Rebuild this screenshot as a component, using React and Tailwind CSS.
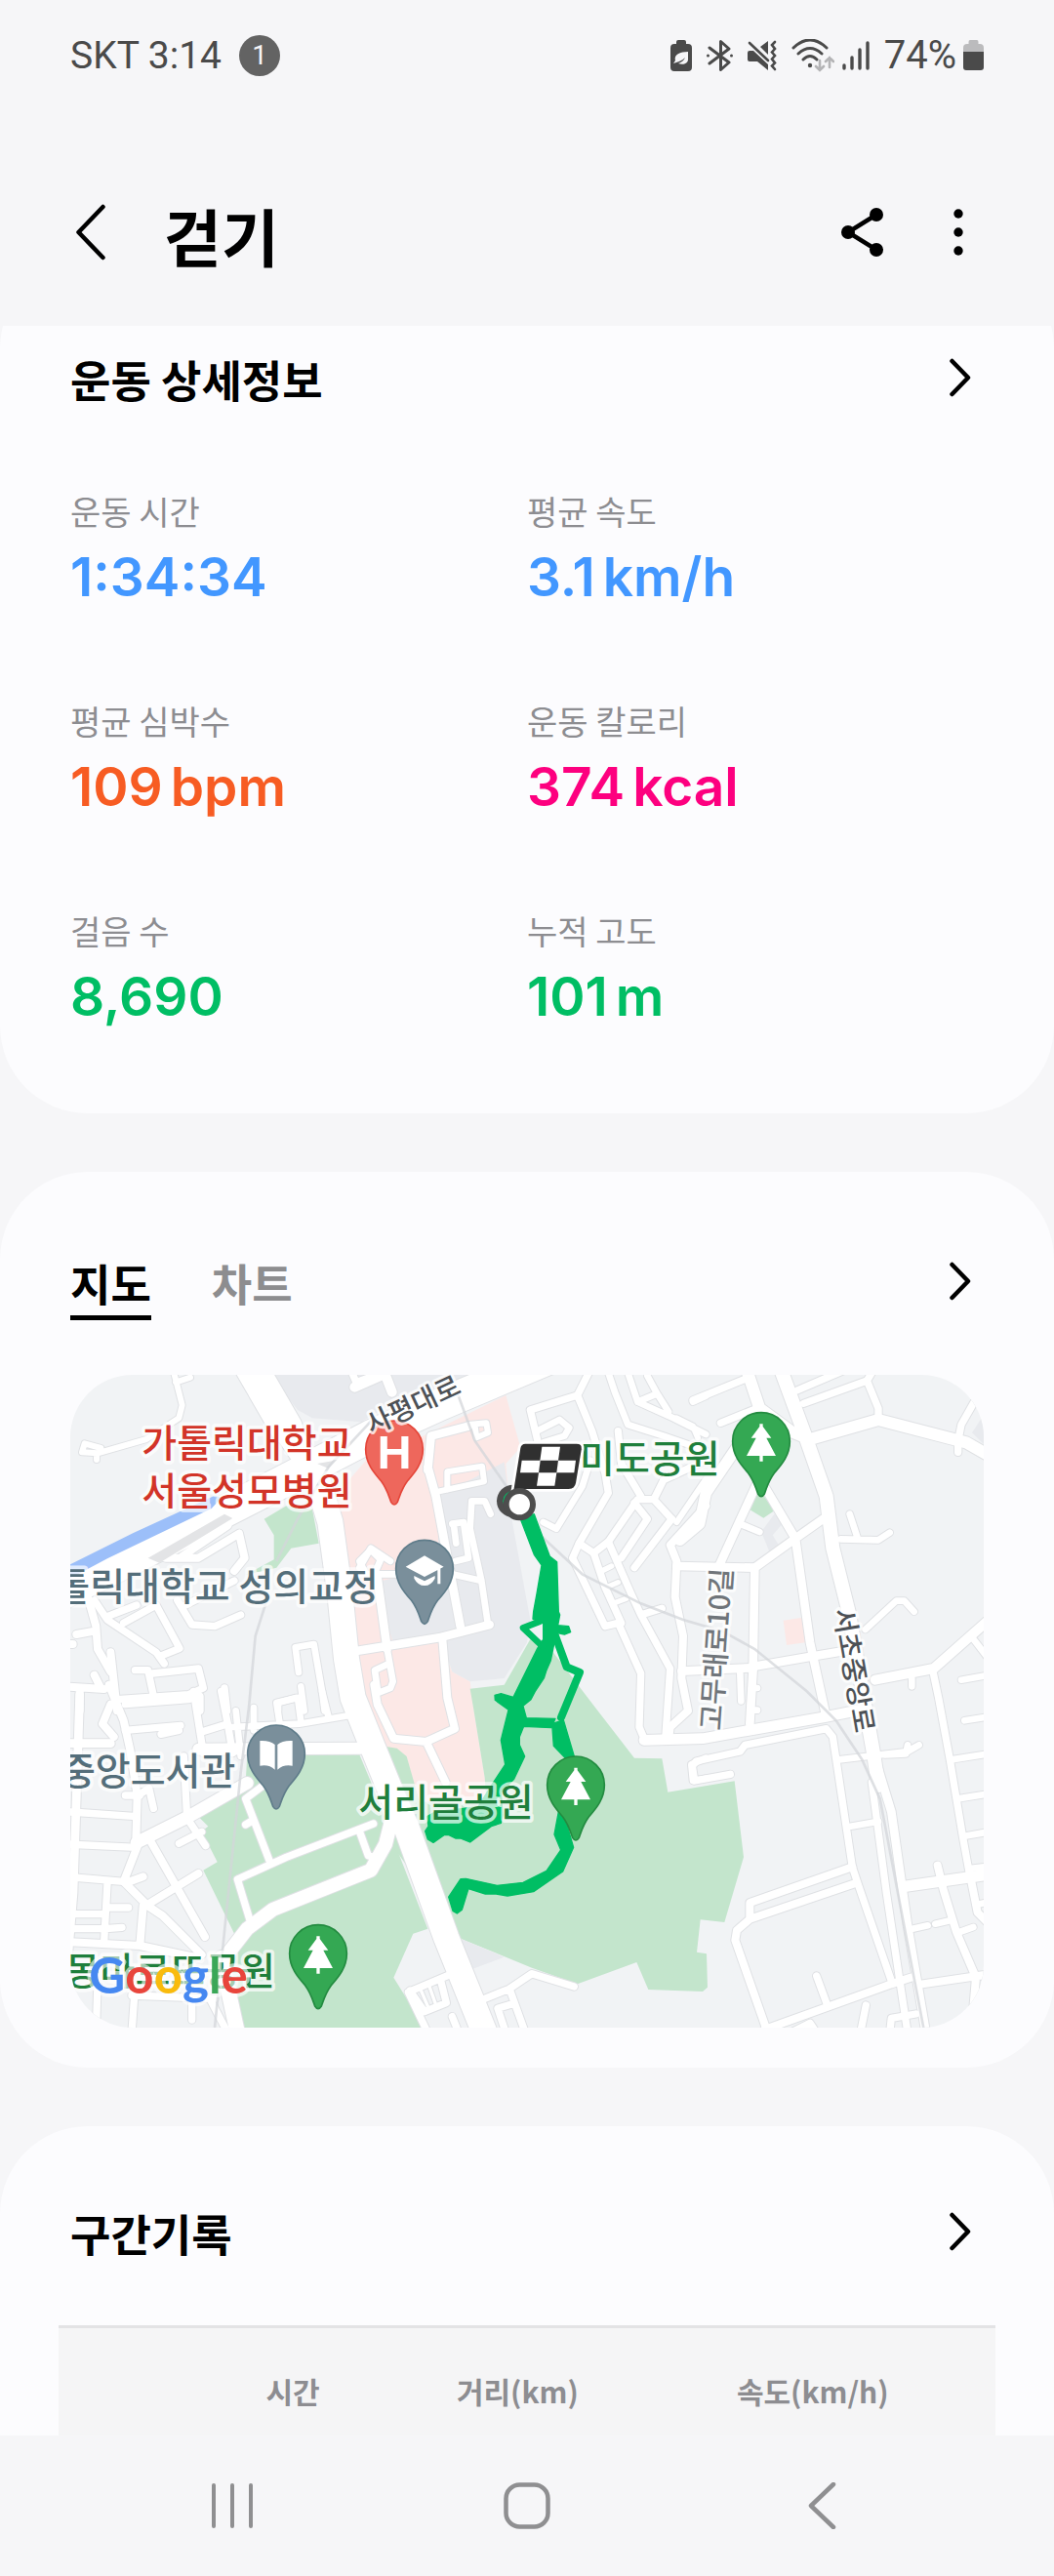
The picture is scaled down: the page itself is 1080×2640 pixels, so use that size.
const KR = "font-['Noto_Sans_CJK_KR',sans-serif]";

const STATS = [
  { label: '운동 시간', value: '1:34:34', unit: '', tone: 'text-[#4297ff]' },
  { label: '평균 속도', value: '3.1', unit: 'km/h', tone: 'text-[#4297ff]' },
  { label: '평균 심박수', value: '109', unit: 'bpm', tone: 'text-[#f75c23]' },
  { label: '운동 칼로리', value: '374', unit: 'kcal', tone: 'text-[#fd007f]' },
  { label: '걸음 수', value: '8,690', unit: '', tone: 'text-[#00be64]' },
  { label: '누적 고도', value: '101', unit: 'm', tone: 'text-[#00be64]' },
];

function StatusBar() {
  return (
    <div className="flex h-[114px] items-center justify-between px-[72px] text-[#4a4a4a]">
      <div className="flex items-center gap-[18px]">
        <span className="font-['Roboto',sans-serif] text-[39px] leading-12">SKT 3:14</span>
        <span className="flex size-[42px] items-center justify-center rounded-full bg-[#636363] font-['Roboto',sans-serif] text-[28px] leading-8 text-[#f6f6f8]">
          1
        </span>
      </div>
      <div className="flex items-center gap-[7px]">
        <div className="flex items-center gap-[15px]">
          <svg viewBox="0 0 22 32" className="h-8 w-[22px]" aria-hidden="true">
            <path fill="currentColor" d="M8 0h6q2 0 2 2v2h2q4 0 4 4v20q0 4-4 4H4q-4 0-4-4V8q0-4 4-4h2V2q0-2 2-2Z" />
            <path fill="#f6f6f8" d="M18 12v8c0 4-5 6-10 4 3-1 6-3 7-6-3 3-6 4-9 5l-3 1 2-3c-2-6 5-9 13-9Z" />
          </svg>
          <svg viewBox="0 0 27 32" className="h-8 w-[27px]" fill="none" stroke="currentColor" strokeWidth="3" strokeLinejoin="round" strokeLinecap="round" aria-hidden="true">
            <path d="M3 8 23 23l-8.500 7.500V1.500L23 9 3 24" />
            <circle cx="1.500" cy="16" r="1.500" fill="currentColor" stroke="none" />
            <circle cx="25.500" cy="16" r="1.500" fill="currentColor" stroke="none" />
          </svg>
          <svg viewBox="0 0 30 32" className="h-8 w-[30px]" aria-hidden="true">
            <path fill="currentColor" d="M2 11h4l15 14v6L10 22H2q-2 0-2-2v-7q0-2 2-2ZM13 7l8-6v14Z" />
            <path fill="none" stroke="currentColor" strokeWidth="2.600" strokeLinecap="round" d="m2 3 19 18M28 2l-3 3 3 4-3 3.500 3 3.500-3 3.500 3 4-3 3 3 3.500" />
          </svg>
          <div className="flex items-center gap-2">
            <svg viewBox="0 0 44 34" className="h-[34px] w-[44px]" fill="none" strokeLinecap="round" aria-hidden="true">
              <path stroke="currentColor" strokeWidth="3" d="M2 9q17-16 34 0M7 15q12-11 24 0M12 21q7-7 14 0" />
              <circle cx="19" cy="27" r="2.200" fill="currentColor" />
              <path stroke="#b4b4b6" strokeWidth="2.600" d="M29 22v10m-4-4 4 4 4-4M39 29V19m-4 4 4-4 4 4" />
            </svg>
            <svg viewBox="0 0 28 32" className="h-8 w-[28px]" stroke="currentColor" strokeWidth="3.400" strokeLinecap="round" aria-hidden="true">
              <path d="M2 26v3M10 18v11M18 10v19M26 3v26" />
            </svg>
          </div>
          <span className="font-['Roboto',sans-serif] text-[40px] leading-12">74%</span>
        </div>
        <svg viewBox="0 0 21 32" className="h-8 w-[21px]" aria-hidden="true">
          <path fill="#bbbbbd" d="M7 0h7q1.500 0 1.500 2v2H17q4 0 4 4v5H0V8q0-4 4-4h1.500V2Q5.500 0 7 0Z" />
          <path fill="currentColor" d="M0 12h21v16q0 3-3 3H3q-3 0-3-3Z" />
        </svg>
      </div>
    </div>
  );
}

function AppHeader() {
  return (
    <header className="flex h-[220px] items-center justify-between pl-[72px] pr-20 pt-7">
      <div className="flex items-center gap-14">
        <button type="button" aria-label="뒤로">
          <svg viewBox="0 0 40 60" className="h-[60px] w-[40px]" fill="none" stroke="#000" strokeWidth="4.500" strokeLinecap="round" strokeLinejoin="round">
            <path d="M33.500 4 8.500 30l25 26" />
          </svg>
        </button>
        <h1 className="pt-1 text-[64px] font-bold leading-[84px] text-black">걷기</h1>
      </div>
      <div className="flex items-center gap-14">
        <button type="button" aria-label="공유">
          <svg viewBox="0 0 48 52" className="h-[52px] w-[48px]" fill="#000">
            <path d="M38 8 9 26l29 18" fill="none" stroke="#000" strokeWidth="4.500" />
            <circle cx="38" cy="8" r="7" />
            <circle cx="9" cy="26" r="7" />
            <circle cx="38" cy="44" r="7" />
          </svg>
        </button>
        <button type="button" aria-label="더보기" className="flex w-9 justify-center">
          <svg viewBox="0 0 10 48" className="h-12 w-[10px]" fill="#000">
            <circle cx="5" cy="5" r="4.700" />
            <circle cx="5" cy="24" r="4.700" />
            <circle cx="5" cy="43" r="4.700" />
          </svg>
        </button>
      </div>
    </header>
  );
}

function MoreButton({ label }) {
  return (
    <button type="button" aria-label={label} className="flex h-[62px] w-[48px] items-center justify-center">
      <svg viewBox="0 0 24 40" className="h-10 w-6" fill="none" stroke="#000" strokeWidth="4.500" strokeLinecap="round" strokeLinejoin="round">
        <path d="M3.500 3 20 20 3.500 37" />
      </svg>
    </button>
  );
}

function DetailCard() {
  return (
    <section className="overflow-hidden">
      <div className="-mt-[67px] rounded-[90px] bg-[#fcfcfe] px-[72px] pb-[83px] pt-[89px]">
        <div className="flex items-start justify-between">
          <h2 className="text-[45px] font-bold leading-[66px] text-black">운동 상세정보</h2>
          <MoreButton label="운동 상세정보 더보기" />
        </div>
        <dl className="mt-[76px] grid grid-cols-2 gap-y-[85px]">
          {STATS.map((s) => (
            <div key={s.label}>
              <dt className="mb-1 text-[34px] leading-[52px] text-[#8d8d91]">{s.label}</dt>
              <dd className={`flex gap-2 font-['Inter',sans-serif] text-[55px] font-semibold leading-[74px] ${s.tone}`}>
                <span>{s.value}</span>
                {s.unit && <span>{s.unit}</span>}
              </dd>
            </div>
          ))}
        </dl>
      </div>
    </section>
  );
}

/* Streets are listed per tile: each tile has an origin, and each street a width and a line. */
const TILES = [
  {
    at: [0, 0],
    roads: [
      [18, 'M352,10 L380,120 L370,160 L270,225 L120,268 L72,265 L80,238 L130,252 M360,50 L405,35 M117,270V288'],
      [22, 'M902,20 L915,50 L1010,15'],
      [98, 'M-20,715 L200,605 L700,350 L960,215 L1180,115 L1500,-20'],
      [24, 'M330,590 L430,590 L555,515 M380,585 L520,490 M555,515 L572,590 L540,630'],
      [22, 'M110,720 L150,780 L300,880 L325,915 M200,790 L300,735 L372,868 L310,893 M150,770 L240,735 M365,720 L410,795 L480,800 L560,765 M380,740 L500,680 L540,660'],
      [24, 'M90,710 L115,800 L120,870 L160,940 M55,825 L110,815 M30,855h14 M160,880 L180,1060 M110,950 L130,990 M20,985 L140,993 M65,1000 V1060'],
      [22, 'M235,935 H275 L290,1005 M290,945 L430,930 L445,990 L400,1010 L180,1025 M435,1015 V1060 M510,990 L518,1060'],
      [20, 'M738,942 L728,865 L785,855 L810,1000 L818,1060 M745,985 L755,1060 M675,1060 V1035 L730,1020'],
      [20, 'M945,640 L925,600 L960,565 L990,595 L975,630 M870,640 L1060,640'],
    ],
  },
  {
    at: [930, 0],
    roads: [
      [30, 'M70,15 L95,80 M-20,65 L60,30'],
      [26, 'M205,310 L230,400 L305,800 M205,320 L215,215 L330,185'],
      [18, 'M330,180 L385,175 L390,205 L355,220 L350,185 M240,385 L378,355 L372,308 L265,325 L265,380'],
      [20, 'M398,455 L380,415 L340,415 L335,500 L370,660 L390,795 M280,485 L315,480 L330,590 L290,600 M285,490 L292,545 M280,640 L370,660'],
      [26, 'M-70,885 L240,835 L395,795 M50,650 L80,870'],
      [24, 'M250,840 L265,1020 L288,1115 L200,1155 L100,1145 L50,1040 L40,980 M200,1155 L260,1280'],
      [20, 'M80,870 L98,970 L90,990 L52,1005 L42,935 L85,915 M-5,620 L30,560 L90,600'],
      [22, 'M700,20 L665,90 L520,135 L545,240 M665,90 L710,200 L750,330 L760,390 L670,545 L650,590 L750,800 L790,790 L860,945 L855,1110 L870,1145'],
      [20, 'M540,200 L610,165 L640,190 L625,215 L560,235'],
      [20, 'M760,20 L780,80 L820,180 L930,215 L1060,260 M820,20 L850,110 L960,160 L1060,210 M850,110 L910,85 L880,30 M910,85 L945,140 M1020,110 L1060,92'],
      [24, 'M1060,430 L950,550 L970,600 L965,710 L990,830 L985,960 L1005,1060 L950,1110 L945,1150'],
      [22, 'M670,545 L715,575 L760,540 L850,410 L900,410 L955,470 M860,400 L800,300 L790,200 M900,410 L930,350 L1060,290'],
      [22, 'M715,575 L750,680 L800,790 M760,540 L830,700 L860,765 L950,930 L935,1150 M860,765 L925,745 M840,420 L880,470 L800,590 M955,470 L840,620'],
      [16, 'M740,630 L770,615 M755,680 L790,665 M775,730 L815,715'],
      [20, 'M600,500 L680,370 L705,290 M560,480 L600,500'],
      [26, 'M970,615 L1210,620 M985,938 L1200,928'],
      [32, 'M870,1150 L1050,1145 L1420,1080 L1530,1058'],
      [20, 'M1020,1275 L1015,1225 L1060,1205 M1020,1275 L1060,1268'],
    ],
  },
  {
    at: [1920, 0],
    roads: [
      [42, 'M300,10 L370,200 L440,400 L460,560 L510,760 L560,1050 L585,1190 L600,1290'],
      [36, 'M195,10 L235,130 L330,200 L390,225 L600,165 L870,235 L940,275'],
      [22, 'M30,105 L190,40 M115,175 L240,125 M350,75 L490,15 M370,115 L565,45 L600,130 V160 M565,45 L580,20 M895,110 L855,180 L845,230 V265'],
      [20, 'M512,455 L535,525 M485,532 L600,535 L635,512 M560,810 L655,722 L680,722 L710,755 M175,485 L235,510'],
      [26, 'M430,470 L345,530 L220,620 L215,930 L205,1100 M345,530 L390,850 L440,1080 M250,370 L345,530 M225,365 L110,615'],
      [34, 'M165,250 L70,390 L50,485 L-10,535'],
      [18, 'M75,340 L-20,480 M-20,160 L30,185 L45,220'],
      [26, 'M210,925 L410,890 L500,875'],
      [30, 'M590,965 L770,930 L940,780'],
      [20, 'M885,830 L935,895 M703,960 V985 M855,965 L940,950 M175,945 L178,1030 M210,990 H228'],
      [22, 'M768,940 L785,1020 L820,1210 L860,1450 L880,1560'],
    ],
  },
  {
    at: [0, 1020],
    roads: [
      [26, 'M65,-10 L55,300 L45,600 L30,780 M20,140 H160'],
      [24, 'M155,-40 L200,70 L220,160 L242,300 L238,440 M160,20 L135,80 L170,120'],
      [22, 'M205,100 L375,85 M315,112 L370,100 M205,20 L400,5 M415,-20 L445,170 M440,105 L520,80 M500,-20 L520,80 L535,170 M385,180 L395,370'],
      [20, 'M545,40 L560,180 M530,90 L740,80 L890,55 M600,30 V100 M680,80 L670,15 L735,0 L745,75 M810,-20 L830,60'],
      [36, 'M430,158 L930,155'],
      [22, 'M20,350 L240,365 M20,450 L240,460 M245,300 L278,278 L292,340 M205,300 H250'],
      [38, 'M240,445 L400,365 L580,262'],
      [22, 'M395,370 L452,455 M370,448 L440,412 M20,550 L200,565 M150,570 L140,750 M155,645 H215 M20,665 H140 M20,710 H145 L195,706'],
      [24, 'M245,450 L200,565 L275,640 L320,670 L440,790 M205,570 L260,550 M285,445 L450,735 M270,638 L430,540 M260,640 L250,760 M20,750 L250,762 L430,800'],
      [22, 'M575,390 L600,375 M635,265 L575,310 L648,500 M590,690 L550,558 L700,490 L968,387 M925,410 L952,485 L985,495'],
      [42, 'M510,800 L580,710 L660,650 L960,530 L1005,450 L1025,370'],
      [22, 'M235,890 L225,1030 M225,915 L480,925 M410,930 V990 M120,880 L115,1030 M465,925 L520,1030'],
      [46, 'M500,800 L550,1030'],
    ],
  },
  {
    at: [930, 1020],
    roads: [
      [22, 'M275,850 L145,905 L205,1030 M150,900 L195,965 L262,938 L245,870 M380,925 L455,895 L525,848 L655,888 M458,900 L505,1030 M470,940 L420,955 L445,1030 M280,980 L300,1030'],
      [10, 'M180,890 L210,960 M208,882 L232,950'],
    ],
  },
  {
    at: [1920, 1020],
    roads: [
      [22, 'M145,235 L35,255 L28,210 L40,195 L175,165 L190,145 L440,95 L460,120 L520,520 L540,580 L640,870'],
      [20, 'M480,190 L690,165 L725,145 M620,175 L685,172 L690,145 M515,395 L600,380 M215,38 H228'],
      [24, 'M520,520 L205,630 V680 M530,570 L205,680 L165,715 L160,745 L260,1030 M250,1020 L640,880 L700,860'],
      [22, 'M410,855 L445,950 M562,945 L545,1030 M635,1030 L640,985 L715,972 M330,1030 L390,1000 L410,1030'],
      [22, 'M580,260 L625,600 L690,1030'],
      [26, 'M585,170 L640,350 L690,700 L748,1040'],
      [20, 'M865,70 L940,58 M825,190 L940,172 M845,310 L940,295 M865,425 L940,412 M880,525 L940,518 M905,635 L940,628 M705,710 L752,700 M775,695 L820,685 M850,720 L892,705'],
      [34, 'M680,580 L940,543'],
      [24, 'M782,515 L800,590 L840,720 L900,860 L888,1000 M885,560 L905,660 L940,695 M735,880 L940,850'],
    ],
  },
  {
    at: [0, 0],
    roads: [
      [100, 'M590,0 L700,190'],
      [78, 'M690,180 L790,330 L835,480 L865,700 L885,900 L905,1020 L965,1170 L1030,1330 L1070,1420 L1192,1758 L1310,2050'],
    ],
  },
];

const PIN =
  'M-88,0A88,88 0 1 1 88,0C88,45 60,75 40,98C22,122 16,145 10,162Q0,178 -10,162C-16,145 -22,122 -40,98C-60,75 -88,45 -88,0Z';

function Pin({ x, y, fill, edge, children }) {
  return (
    <g transform={`translate(${x} ${y})`}>
      <path d={PIN} fill={fill} stroke={edge} strokeWidth="5" />
      <g fill="#fff">{children}</g>
    </g>
  );
}

function Tree() {
  return <path d="M-5,-53H5V-45L31,-10H16L45,45H5V62H-5V45H-45L-16,-10H-31L-5,-45Z" />;
}

function TrailMap() {
  return (
    <svg
      viewBox="36 27 2808 2007"
      className="mt-14 block h-auto w-full overflow-hidden rounded-[64px] bg-[#f1f3f5]"
      role="img"
      aria-label="운동 경로 지도"
    >
      <g>
        <path fill="#e8eaee" d="M650,27 735,135 780,160 930,172 1000,130 1260,27Z" />
        <path fill="#fce8e6" d="M850,400 945,290 1120,215 1375,90 1420,250 1375,300 1380,360 1170,395V840L1210,940 1265,970 1275,1050 1310,1265 1315,1350 1110,1350 1070,1200 995,1170 930,1050Z" />
        <path fill="#e8eaee" d="M1170,400 1370,295 1395,480 1450,780 1440,850 1370,960 1265,970 1210,940 1180,850 1030,855 995,740V660L1165,620Z" />
        <path fill="#c3e5cc" d="M430,1385 575,1280 580,1195H925L965,1290 1135,1730 1090,1745 1030,1880 1125,2034H560L515,1810 545,1755 445,1550 488,1525 440,1430 460,1415Z" />
        <path fill="#c3e5cc" d="M975,1165 1040,1175 1070,1200 1110,1340 1315,1335 1310,1265 1275,1050 1265,992 1370,980 1450,840 1520,880 1650,1050 1770,1205 1855,1207 1873,1310 2078,1276 2106,1510 2047,1710 1973,1702 1962,1802 1992,1807 1995,1910 1980,1923 1813,1917 1777,1833 1595,1900 1455,1850 1230,1758 1030,1480Z" />
        <path fill="#c3e5cc" d="M632,470 700,430 780,440 800,545 715,560 670,620 575,642 662,595 662,520ZM2155,380 2200,445 2167,467 2123,440Z" />
        <path fill="#e8eaee" d="M1230,1758 1370,1817 1270,1855ZM2160,510 2200,455 2230,480 2195,520 2220,560 2185,570ZM2808,205 2844,150V240Z" />
        <path fill="#fce8e6" d="M2228,782 2297,772 2306,848 2238,858Z" />
      </g>
      <g fill="none" strokeLinecap="round" strokeLinejoin="round">
        {TILES.map((t, i) => (
          <g key={i} transform={`translate(${t.at[0]} ${t.at[1]})`} stroke="#dfe1e4">
            {t.roads.map(([w, d]) => (
              <path key={d} d={d} strokeWidth={w + 6} />
            ))}
          </g>
        ))}
        {TILES.map((t, i) => (
          <g key={i} transform={`translate(${t.at[0]} ${t.at[1]})`} stroke="#fff">
            {t.roads.map(([w, d]) => (
              <path key={d} d={d} strokeWidth={w} />
            ))}
          </g>
        ))}
      </g>
      <path fill="#9cbff9" d="M36,610 230,513 480,398 500,405 470,438 150,592 60,640 36,650Z" />
      <path fill="#e3e4e6" d="M275,590 510,455 535,468 310,605ZM795,300 850,290 830,315Z" />
      <g fill="none" stroke="#d3d6d9" strokeWidth="8" strokeOpacity="0.750">
        <path d="M960,170 830,310 735,470 670,600 M640,720 605,830 585,1050 560,1250 520,1640 480,2034" />
        <path d="M1225,80 1280,230 1370,360 1470,510 1610,640 1790,730 1920,780 2040,815 2140,870 2300,1000 2390,1090 2470,1210 2525,1330 2580,1620 2660,2040" />
      </g>

      <g fill="#00be64" stroke="#00be64" strokeLinejoin="round" strokeLinecap="round" transform="translate(930 0)">
        <path strokeWidth="4" d="M490,470 532,455 580,585 602,602 607,755 611,765 605,797 638,800 644,818 625,825 600,820 590,870 583,905 570,935 562,960 535,1000 522,1025 498,1045 508,1082 597,1084 585,1112 500,1108 487,1140V1165L503,1200 470,1270 430,1310 435,1380 430,1405 400,1415 335,1464 305,1452H290L270,1442H255L222,1465 205,1455 197,1430 207,1415 203,1385 230,1370 360,1355 400,1290 443,1225 430,1150 453,1057 412,1027 411,1012 430,1007 468,1018 542,868 560,840V790L528,778 530,755 540,700 555,612 532,580Z" />
        <path fill="none" strokeWidth="20" d="M550,785 498,805 558,862" />
        <path fill="none" strokeWidth="24" d="M590,810 632,925 672,942 615,1080" />
        <path strokeWidth="4" d="M587,1100 622,1088 655,1200 628,1205 592,1168Z" />
        <path strokeWidth="4" d="M607,1370 630,1400 653,1480 620,1554 530,1616 450,1629 415,1623H382L330,1607 310,1672 295,1683 282,1675 269,1632 306,1577 322,1576 418,1597 498,1588 570,1552 614,1488 594,1440Z" />
      </g>

      <g className="font-['Noto_Sans_CJK_KR',sans-serif]" fontSize="117" fontWeight="500" stroke="#fff" strokeOpacity="0.700" strokeWidth="22" strokeLinejoin="round" style={{ paintOrder: 'stroke' }}>
        <text x="256" y="279" fill="#d23428">가톨릭대학교</text>
        <text x="256" y="427" fill="#d23428">서울성모병원</text>
        <text x="984" y="719" textAnchor="end" fill="#546e7a">가톨릭대학교 성의교정</text>
        <text x="544" y="1287" textAnchor="end" fill="#546e7a">중앙도서관</text>
        <text x="1602" y="327" fill="#1f7f3c">미도공원</text>
        <text x="922" y="1382" fill="#1f7f3c">서리골공원</text>
        <text x="666" y="1902" textAnchor="end" fill="#1f7f3c">몽마르뜨공원</text>
      </g>

      <Pin x={1032} y={256} fill="#ee675c" edge="#e4463a">
        <text y="60" textAnchor="middle" className="font-['Liberation_Sans',sans-serif]" fontSize="146" fontWeight="700">H</text>
      </Pin>
      <Pin x={1125} y={623} fill="#7a8f9b" edge="#5f7c8a">
        <path d="M-58,-6 0,-40 59,-6 0,25ZM40,-2H49V47H40ZM-32,22 0,38 32,22V30Q20,52 0,52 -20,52 -32,30Z" />
      </Pin>
      <Pin x={669} y={1192} fill="#7a8f9b" edge="#5f7c8a">
        <path d="M-50,-40Q-20,-42 -4,-28V49Q-22,32 -50,37ZM50,-40Q20,-42 4,-28V49Q22,32 50,37Z" />
      </Pin>
      <Pin x={2160} y={231} fill="#34a853" edge="#238b40"><Tree /></Pin>
      <Pin x={1590} y={1288} fill="#34a853" edge="#238b40"><Tree /></Pin>
      <Pin x={798} y={1806} fill="#34a853" edge="#238b40"><Tree /></Pin>

      <g className="font-['Noto_Sans_CJK_KR',sans-serif]" fontSize="84" fontWeight="500" stroke="#fff" strokeOpacity="0.800" strokeWidth="18" strokeLinejoin="round" style={{ paintOrder: 'stroke' }}>
        <text transform="translate(962 212) rotate(-25)" fill="#4d5156">사평대로</text>
        <text transform="translate(2036 1122) rotate(-86)" fill="#70757a" fontSize="87">고무래로10길</text>
        <text transform="translate(2382 750) rotate(80)" fill="#4d5156">서초중앙로</text>
      </g>

      <g transform="translate(930 0)">
        <circle cx="467" cy="415" r="50" fill="#4d4d4d" />
        <circle cx="467" cy="415" r="31" fill="#00be64" />
        <path d="M505,235H662Q684,235 681,258L664,360Q660,382 638,382H465L486,252Q489,235 505,235Z" fill="#303030" stroke="#fff" strokeWidth="8" />
        <path fill="#fff" d="M556,248H612L606,290H660L655,328H601L595,368H540L546,328H489L494,290H550Z" />
        <path fill="#303030" d="M551,290H606L601,328H546Z" />
        <circle cx="487" cy="425" r="41" fill="#fff" stroke="#4d4d4d" strokeWidth="18" />
      </g>

      <text x="94" y="1928" className="font-['Lato',sans-serif]" fontSize="153" fontWeight="700" stroke="#fff" strokeOpacity="0.600" strokeWidth="22" strokeLinejoin="round" style={{ paintOrder: 'stroke' }}>
        <tspan fill="#4688f1">G</tspan>
        <tspan fill="#e8453c">o</tspan>
        <tspan fill="#f9bb0d">o</tspan>
        <tspan fill="#4688f1">g</tspan>
        <tspan fill="#3aa757">l</tspan>
        <tspan fill="#e8453c">e</tspan>
      </text>
    </svg>
  );
}

function MapCard() {
  return (
    <section className="mt-15 rounded-[90px] bg-[#fcfcfe] px-[72px] pb-[41px] pt-[81px]">
      <div className="flex items-start justify-between">
        <div role="tablist" className="flex gap-[62px] text-[45px] font-bold leading-[66px]">
          <button type="button" role="tab" aria-selected="true" className="border-b-[5px] border-black text-black">
            지도
          </button>
          <button type="button" role="tab" aria-selected="false" className="border-b-[5px] border-transparent text-[#8d8d8f]">
            차트
          </button>
        </div>
        <MoreButton label="지도 더보기" />
      </div>
      <TrailMap />
    </section>
  );
}

function SplitsCard() {
  return (
    <section className="mt-15 rounded-t-[90px] bg-[#fcfcfe] px-[60px] pt-[77px]">
      <div className="flex items-start justify-between px-3">
        <h2 className="text-[45px] font-bold leading-[66px] text-black">구간기록</h2>
        <MoreButton label="구간기록 더보기" />
      </div>
      <table className="mt-[61px] w-full table-fixed border-t-[3px] border-[#e3e3e5] bg-[#f5f5f6] text-[30px] leading-11 text-[#8d8d91]">
        <thead>
          <tr>
            <td className="w-[13%]" />
            <th scope="col" className="w-[24%] pb-6 pt-[42px] font-bold">시간</th>
            <th scope="col" className="w-[24%] pb-6 pt-[42px] font-bold">거리(km)</th>
            <th scope="col" className="w-[39%] pb-6 pt-[42px] font-bold">속도(km/h)</th>
          </tr>
        </thead>
      </table>
    </section>
  );
}

function NavBar() {
  return (
    <nav className="grid h-36 grid-cols-3 place-items-center px-[87px]">
      <button type="button" aria-label="최근 앱">
        <svg viewBox="0 0 48 48" className="size-12" stroke="#8f8f91" strokeWidth="4" strokeLinecap="round">
          <path d="M5 3v42M24 3v42M43 3v42" />
        </svg>
      </button>
      <button type="button" aria-label="홈">
        <svg viewBox="0 0 48 48" className="size-12" fill="none" stroke="#8f8f91" strokeWidth="4.500">
          <rect x="2.500" y="2.500" width="43" height="43" rx="14" />
        </svg>
      </button>
      <button type="button" aria-label="이전">
        <svg viewBox="0 0 48 48" className="size-12" fill="none" stroke="#8f8f91" strokeWidth="4.500" strokeLinecap="round" strokeLinejoin="round">
          <path d="M36 2 13 24l23 22" />
        </svg>
      </button>
    </nav>
  );
}

export default function App() {
  return (
    <div className={`flex min-h-screen flex-col bg-[#f6f6f8] ${KR}`}>
      <StatusBar />
      <AppHeader />
      <main>
        <DetailCard />
        <MapCard />
        <SplitsCard />
      </main>
      <NavBar />
    </div>
  );
}
